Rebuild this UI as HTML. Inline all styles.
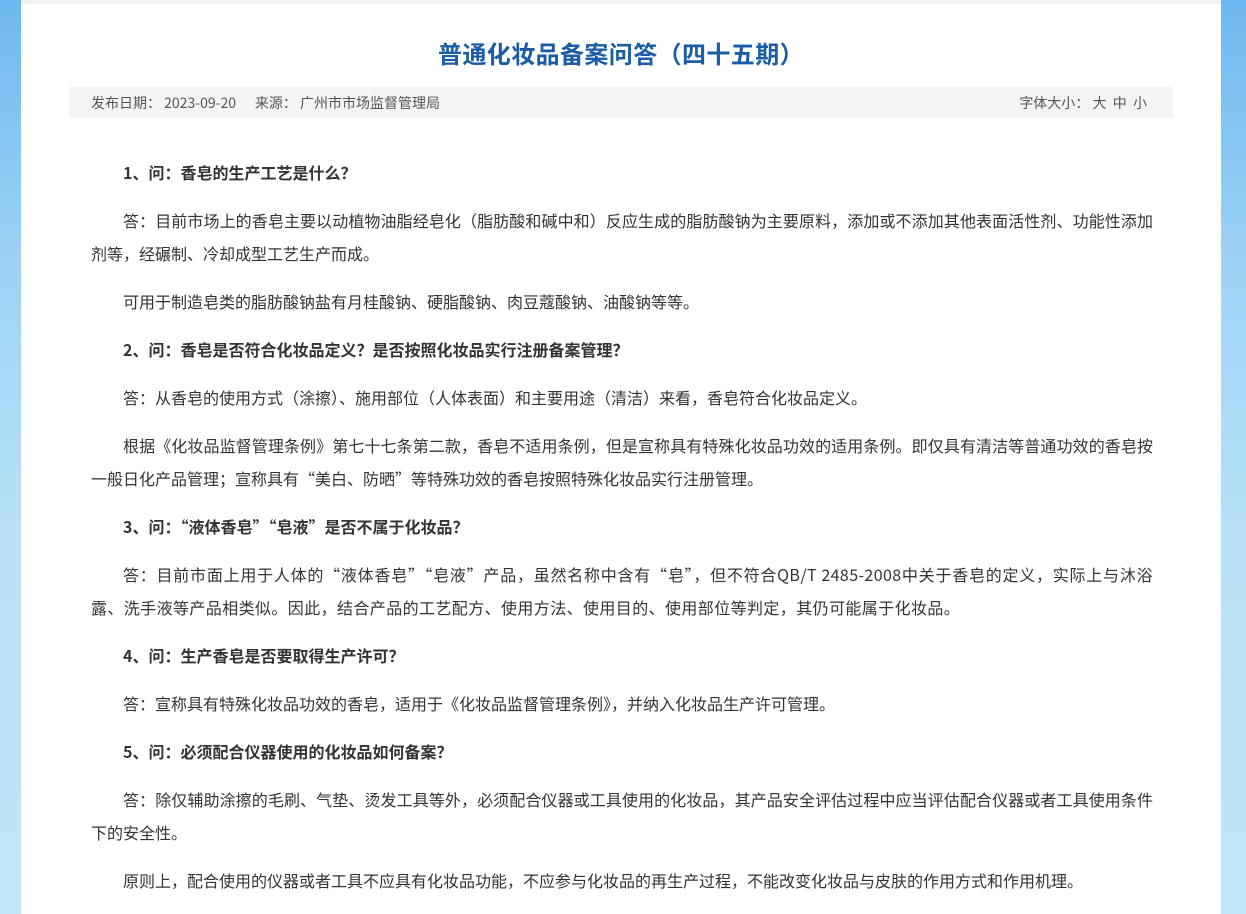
<!DOCTYPE html>
<html><head><meta charset="utf-8"><style>
html,body{margin:0;padding:0}
body{width:1246px;height:914px;overflow:hidden;background:linear-gradient(180deg,#6db8f0 0%,#9fd4f5 30%,#b8e2f7 60%,#bfe6f8 100%);font-family:"Noto Sans CJK SC","Liberation Sans",sans-serif;}
.panel{position:absolute;left:21px;top:0;width:1200px;height:914px;background:#fff;border-top:4px solid #f0f0f0;box-sizing:border-box}
h1{position:absolute;left:0;width:1200px;top:32px;margin:0;text-align:center;font-size:24px;line-height:34px;color:#1b5ca6;font-weight:bold;letter-spacing:0.4px}
.meta{position:absolute;left:48px;top:83px;width:1104px;height:31px;background:#f3f4f6;font-size:14px;color:#555;line-height:31px}
.meta .l{position:absolute;left:22px;top:1px}
.meta .r{position:absolute;right:26px;top:1px}
.content{position:absolute;left:70px;top:152px;width:1062px;font-size:16px;color:#333;}
p{margin:0 0 15px 0;line-height:33px;text-indent:2em;text-align:justify}
p.w{letter-spacing:0.4px}
b{font-weight:bold}
</style></head><body>
<div class="panel">
<h1>普通化妆品备案问答（四十五期）</h1>
<div class="meta"><span class="l">发布日期： 2023-09-20&nbsp;&nbsp;&nbsp;&nbsp;&nbsp; 来源： 广州市市场监督管理局</span><span class="r">字体大小： 大&nbsp;&nbsp;中&nbsp;&nbsp;小</span></div>
<div class="content">
<p><b>1、问：香皂的生产工艺是什么？</b></p>
<p>答：目前市场上的香皂主要以动植物油脂经皂化（脂肪酸和碱中和）反应生成的脂肪酸钠为主要原料，添加或不添加其他表面活性剂、功能性添加剂等，经碾制、冷却成型工艺生产而成。</p>
<p>可用于制造皂类的脂肪酸钠盐有月桂酸钠、硬脂酸钠、肉豆蔻酸钠、油酸钠等等。</p>
<p><b>2、问：香皂是否符合化妆品定义？是否按照化妆品实行注册备案管理？</b></p>
<p>答：从香皂的使用方式（涂擦）、施用部位（人体表面）和主要用途（清洁）来看，香皂符合化妆品定义。</p>
<p>根据《化妆品监督管理条例》第七十七条第二款，香皂不适用条例，但是宣称具有特殊化妆品功效的适用条例。即仅具有清洁等普通功效的香皂按一般日化产品管理；宣称具有“美白、防晒”等特殊功效的香皂按照特殊化妆品实行注册管理。</p>
<p><b>3、问：“液体香皂”“皂液”是否不属于化妆品？</b></p>
<p class="w">答：目前市面上用于人体的“液体香皂”“皂液”产品，虽然名称中含有“皂”，但不符合QB/T 2485-2008中关于香皂的定义，实际上与沐浴露、洗手液等产品相类似。因此，结合产品的工艺配方、使用方法、使用目的、使用部位等判定，其仍可能属于化妆品。</p>
<p><b>4、问：生产香皂是否要取得生产许可？</b></p>
<p>答：宣称具有特殊化妆品功效的香皂，适用于《化妆品监督管理条例》，并纳入化妆品生产许可管理。</p>
<p><b>5、问：必须配合仪器使用的化妆品如何备案？</b></p>
<p>答：除仅辅助涂擦的毛刷、气垫、烫发工具等外，必须配合仪器或工具使用的化妆品，其产品安全评估过程中应当评估配合仪器或者工具使用条件下的安全性。</p>
<p>原则上，配合使用的仪器或者工具不应具有化妆品功能，不应参与化妆品的再生产过程，不能改变化妆品与皮肤的作用方式和作用机理。</p>
</div>
</div>
</body></html>
